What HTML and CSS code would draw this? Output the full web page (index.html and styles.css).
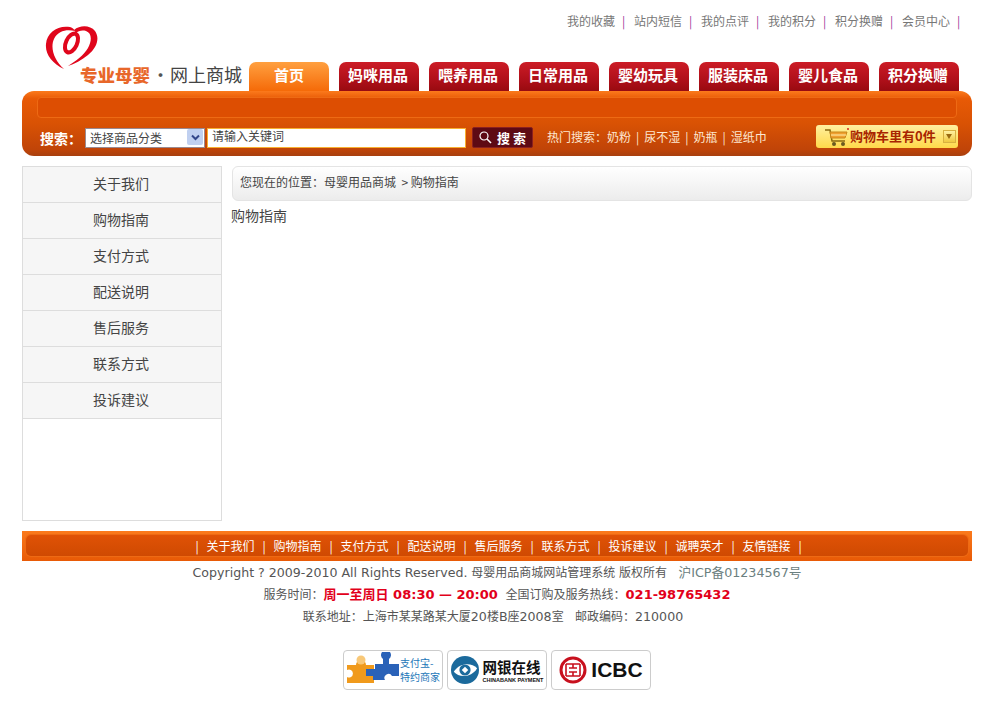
FILE: index.html
```html
<!DOCTYPE html>
<html lang="zh-CN">
<head>
    <meta charset="UTF-8">
    <title>购物指南</title>
    <link rel="stylesheet" href="styles.css">
</head>
<body>
<div class="wrap">
    <div class="head">
        <div class="logo">
            <svg class="logo-mark" width="52" height="44" viewBox="0 0 52 44" fill="#e0061c">
                <path d="M18 43C6 37 -1 28 0 18C1 6 12 -1 24 1C27 2 28 3 29 5C22 3 12 4 8 13C4 22 8 34 18 43Z"/>
                <path d="M28 4C34 -1 44 -1 49 5C54 12 51 22 42 29C36 34 28 38 22 40C30 35 38 29 42 22C46 15 46 7 40 5C36 4 32 5 30 7Z"/>
                <ellipse cx="25.500" cy="17" rx="5.500" ry="10" transform="rotate(25 25.500 17)" fill="none" stroke="#e0061c" stroke-width="4"/>
            </svg>
            <div class="logo-text"><span class="logo-a">专业母婴</span><span class="logo-dot">•</span><span class="logo-b">网上商城</span></div>
        </div>
        <div class="head-right">
            <div class="toplinks">
                <a>我的收藏</a><i>|</i>
                <a>站内短信</a><i>|</i>
                <a>我的点评</a><i>|</i>
                <a>我的积分</a><i>|</i>
                <a>积分换赠</a><i>|</i>
                <a>会员中心</a><i>|</i>
            </div>
            <div class="nav">
                <a class="on">首页</a>
                <a>妈咪用品</a>
                <a>喂养用品</a>
                <a>日常用品</a>
                <a>婴幼玩具</a>
                <a>服装床品</a>
                <a>婴儿食品</a>
                <a>积分换赠</a>
            </div>
        </div>
    </div>

    <div class="bar">
        <div class="subnav"></div>
        <div class="search">
            <b class="search-label">搜索：</b>
            <div class="select">
                <span>选择商品分类</span>
                <span class="select-btn">
                    <svg width="9" height="7" viewBox="0 0 9 7" fill="none" stroke="#33478a" stroke-width="2"><path d="M1 1.500L4.500 5L8 1.500"/></svg>
                </span>
            </div>
            <input class="keyword" type="text" value="请输入关键词">
            <div class="search-btn">
                <svg width="13" height="13" viewBox="0 0 13 13" fill="none" stroke="#fff" stroke-width="1.200"><circle cx="5" cy="5" r="4"/><path d="M8 8L12 12" stroke-width="1.600"/></svg>
                <b>搜 索</b>
            </div>
            <div class="hot">热门搜索：奶粉<i>|</i>尿不湿<i>|</i>奶瓶<i>|</i>湿纸巾</div>
            <div class="cart">
                <svg width="26" height="20" viewBox="0 0 26 20" fill="none">
                    <path d="M1 3H6L8 14H21" stroke="#8a6a10" stroke-width="1.500"/>
                    <path d="M6 5H23L21 11H7Z" fill="#f0a030" stroke="#c8871a"/>
                    <path d="M7 8H22" stroke="#fff3b0"/>
                    <circle cx="10" cy="17" r="2" fill="#6a5a20"/>
                    <circle cx="19" cy="17" r="2" fill="#6a5a20"/>
                    <circle cx="24" cy="2" r="1" fill="#d02020"/>
                </svg>
                <b>购物车里有0件</b>
                <span class="cart-arrow"></span>
            </div>
        </div>
    </div>

    <div class="main">
        <div class="side">
            <a>关于我们</a>
            <a>购物指南</a>
            <a>支付方式</a>
            <a>配送说明</a>
            <a>售后服务</a>
            <a>联系方式</a>
            <a>投诉建议</a>
        </div>
        <div class="content">
            <div class="crumb">您现在的位置：母婴用品商城 &nbsp;&gt; 购物指南</div>
            <div class="article">购物指南</div>
        </div>
    </div>

    <div class="foot-bar">
        <div class="foot-links">
            <i>|</i><a>关于我们</a><i>|</i><a>购物指南</a><i>|</i><a>支付方式</a><i>|</i><a>配送说明</a><i>|</i><a>售后服务</a><i>|</i><a>联系方式</a><i>|</i><a>投诉建议</a><i>|</i><a>诚聘英才</a><i>|</i><a>友情链接</a><i>|</i>
        </div>
    </div>

    <div class="copy">
        <p><span class="en">Copyright ? 2009-2010 All Rights Reserved.</span> 母婴用品商城网站管理系统 版权所有 &nbsp; <span class="icp">沪ICP备01234567号</span></p>
        <p>服务时间：<b class="red">周一至周日 08:30 — 20:00</b> &nbsp;全国订购及服务热线：<b class="red">021-98765432</b></p>
        <p class="addr">联系地址：上海市某某路某大厦<span class="en">20</span>楼<span class="en">B</span>座<span class="en">2008</span>室 &nbsp; 邮政编码：<span class="en">210000</span></p>
    </div>

    <div class="badges">
        <div class="badge">
            <svg width="54" height="36" viewBox="0 0 54 36">
                <path d="M1 13H10A5 5 0 1 1 20 13H28V31H1V25A4 4 0 1 0 1 18Z" fill="#f09a1c"/>
                <circle cx="15" cy="8" r="4.500" fill="#f8c878"/>
                <path d="M20 17H29V12H37V7A5 5 0 1 1 43 7V12H53V24H46A4 4 0 1 0 39 28H27V24H20Z" fill="#2a62b8"/>
            </svg>
            <div class="alipay">支付宝-<br>特约商家</div>
        </div>
        <div class="badge">
            <svg width="28" height="28" viewBox="0 0 30 30">
                <circle cx="15" cy="15" r="15" fill="#1b6a9c"/>
                <path d="M3 17C9 7 22 7 28 13C22 23 9 24 3 17Z" fill="#fff"/>
                <circle cx="15" cy="15" r="6" fill="#1b6a9c"/>
                <path d="M15 11.500L18.500 15L15 18.500L11.500 15Z" fill="#fff"/>
            </svg>
            <div class="chinabank"><b>网银在线</b><span>CHINABANK PAYMENT</span></div>
        </div>
        <div class="badge">
            <svg width="28" height="28" viewBox="0 0 28 28" fill="none" stroke="#c8101e">
                <circle cx="14" cy="14" r="12" stroke-width="3"/>
                <path d="M7 8H21M7 20H21M14 8V12M14 16V20M7 8V20M21 8V20M10 12H18M10 16H18" stroke-width="1.600"/>
            </svg>
            <b class="icbc">ICBC</b>
        </div>
    </div>
</div>
</body>
</html>
```

FILE: styles.css
```css
*{
    box-sizing: border-box;
}
body{
    margin: 0;
    background-color: #fff;
    color: #444;
    font-family: "DejaVu Sans", "Noto Sans CJK SC", sans-serif;
    font-size: 12px;
}
i{
    font-style: normal;
}
.wrap{
    width: 950px;
    margin: 0 23px 0 22px;
}

/* head */
.head{
    display: flex;
    height: 91px;
}
.logo{
    width: 227px;
    padding: 26px 0 0 24px;
}
.logo-mark{
    display: block;
    overflow: visible;
}
.logo-text{
    display: flex;
    align-items: center;
    height: 24px;
    margin: -8px 0 0 34px;
    font-family: "Noto Sans CJK SC", sans-serif;
    white-space: nowrap;
}
.logo-a{
    width: 71px;
    color: #e8672a;
    font-size: 17.500px;
    font-weight: 900;
}
.logo-dot{
    width: 19px;
    color: #555;
    font-size: 18px;
    text-align: center;
}
.logo-b{
    color: #444;
    font-size: 18px;
}
.head-right{
    flex: 1;
    display: flex;
    flex-direction: column;
    justify-content: space-between;
}
.toplinks{
    display: flex;
    justify-content: flex-end;
    align-items: center;
    height: 14px;
    margin-top: 13px;
    padding-right: 3px;
    color: #777;
    font-family: "Noto Sans CJK SC", sans-serif;
}
.toplinks a{
    width: 48px;
    white-space: nowrap;
}
.toplinks i{
    width: 19px;
    padding-left: 7px;
    color: #a0409a;
}
.nav{
    display: flex;
    gap: 10px;
}
.nav a{
    width: 80px;
    height: 29px;
    padding-right: 2px;
    border-radius: 7px 7px 0 0;
    background: linear-gradient(#cc1c26, #b0101a 60%, #980a10);
    color: #fff;
    font-family: "Noto Sans CJK SC", sans-serif;
    font-size: 15px;
    font-weight: 700;
    line-height: 26px;
    text-align: center;
}
.nav a.on{
    padding-right: 0;
    background: linear-gradient(#ffa040, #f56a08);
}

/* orange bar */
.bar{
    height: 65px;
    padding: 6px 15px 0;
    border-radius: 12px;
    background: linear-gradient(#fb7a1c, #e85a06 12%, #d95204 50%, #c04408 90%, #a8400f);
}
.subnav{
    height: 21px;
    border: 1px solid #ee6a14;
    border-radius: 4px;
    background: #dd4e02;
}
.search{
    display: flex;
    align-items: center;
    height: 23px;
    margin-top: 8px;
    color: #fff;
    font-family: "Noto Sans CJK SC", sans-serif;
}
.search > *{
    flex: none;
}
.search-label{
    width: 48px;
    padding-left: 3px;
    font-size: 14px;
    white-space: nowrap;
}
.select{
    display: flex;
    justify-content: space-between;
    align-items: center;
    width: 120px;
    height: 20px;
    padding: 0 1px 1px 4px;
    border: 1px solid #9a8a90;
    background: #fff;
    color: #444;
}
.select-btn{
    display: flex;
    justify-content: center;
    align-items: center;
    width: 16px;
    height: 16px;
    border-radius: 2px;
    background: #c0d0f0;
}
.keyword{
    width: 259px;
    height: 20px;
    margin-left: 2px;
    padding: 0 4px 4px;
    border: 1px solid #f8b030;
    background: #fff;
    color: #444;
    font: 12px/14px "Noto Sans CJK SC", sans-serif;
    outline: none;
}
.search-btn{
    display: flex;
    justify-content: center;
    align-items: center;
    gap: 5px;
    width: 61px;
    height: 21px;
    margin-left: 6px;
    border: 1px solid #8a2020;
    border-radius: 2px;
    background: #5e0a14;
    font-size: 13px;
    white-space: nowrap;
}
.hot{
    width: 269px;
    margin-left: 14px;
    padding-bottom: 3px;
    color: #fde6d0;
    white-space: nowrap;
}
.hot i{
    margin: 0 5px;
}
.cart{
    display: flex;
    align-items: center;
    width: 142px;
    height: 23px;
    margin-bottom: 2px;
    padding: 0 2px 0 8px;
    border-radius: 3px;
    background: linear-gradient(#fff0a0, #ffd94a);
    color: #a82400;
}
.cart svg{
    flex: none;
}
.cart b{
    flex: 1;
    padding-bottom: 2px;
    font-size: 13px;
    white-space: nowrap;
}
.cart-arrow{
    position: relative;
    width: 13px;
    height: 13px;
    border: 1px solid #d8b040;
    background: linear-gradient(#fff0a0, #f0c840);
}
.cart-arrow:after{
    content: "";
    position: absolute;
    top: 3px;
    left: 2px;
    border: 3.500px solid transparent;
    border-top: 5px solid #9a6a10;
    border-bottom: 0;
}

/* main */
.main{
    display: flex;
    gap: 10px;
    height: 375px;
    padding: 10px 0;
}
.side{
    width: 200px;
    border: 1px solid #ddd;
}
.side a{
    display: block;
    height: 36px;
    padding-right: 2px;
    border-bottom: 1px solid #ddd;
    background: #f6f6f6;
    color: #444;
    font-family: "Noto Sans CJK SC", sans-serif;
    font-size: 14px;
    line-height: 32px;
    text-align: center;
}
.content{
    flex: 1;
}
.crumb{
    height: 35px;
    padding-left: 7px;
    border: 1px solid #e4e4e4;
    border-radius: 6px;
    background: linear-gradient(#fff, #ececec);
    font-family: "Noto Sans CJK SC", sans-serif;
    line-height: 30px;
}
.article{
    margin: 5px 0 0 -1px;
    font-family: "Noto Sans CJK SC", sans-serif;
    font-size: 14px;
    line-height: 18px;
}

/* footer */
.foot-bar{
    height: 30px;
    padding: 4px;
    background: linear-gradient(#fb7a1c, #e85a06);
}
.foot-links{
    display: flex;
    justify-content: center;
    align-items: center;
    height: 21px;
    padding-left: 3px;
    border-radius: 5px;
    background: linear-gradient(#e05206, #cf4a02);
    box-shadow: 0 0 0 1px #ee6a14;
    color: #fff;
    font-family: "Noto Sans CJK SC", sans-serif;
    line-height: 21px;
}
.foot-links a{
    width: 48px;
    white-space: nowrap;
}
.foot-links i{
    width: 19px;
    text-align: center;
}
.copy{
    padding-top: 1px;
    color: #555;
    text-align: center;
}
.copy p{
    margin: 0;
    height: 22px;
    line-height: 22px;
    white-space: nowrap;
}
.copy .addr{
    padding-right: 8px;
}
.en{
    font-size: 12.600px;
}
.icp{
    color: #6b8080;
    font-size: 12.700px;
}
.red{
    color: #e2001a;
    font-size: 13px;
}
.badges{
    display: flex;
    justify-content: center;
    gap: 4px;
    margin-top: 22px;
}
.badge{
    display: flex;
    justify-content: center;
    align-items: center;
    gap: 4px;
    width: 100px;
    height: 40px;
    border: 1px solid #ccc;
    border-radius: 4px;
    background: #fff;
}
.badge:first-child{
    gap: 0;
}
.alipay{
    color: #1b76b8;
    font-family: "Noto Sans CJK SC", sans-serif;
    font-size: 10px;
    line-height: 14.500px;
    white-space: nowrap;
}
.chinabank{
    display: flex;
    flex-direction: column;
    color: #111;
    font-family: "Noto Sans CJK SC", sans-serif;
}
.chinabank b{
    font-size: 14.500px;
    line-height: 20px;
}
.chinabank span{
    font-family: "Liberation Sans", sans-serif;
    font-size: 5.500px;
    font-weight: 700;
    line-height: 7px;
    white-space: nowrap;
}
.icbc{
    color: #111;
    font-family: "Liberation Sans", sans-serif;
    font-size: 21px;
    line-height: 24px;
}
```
